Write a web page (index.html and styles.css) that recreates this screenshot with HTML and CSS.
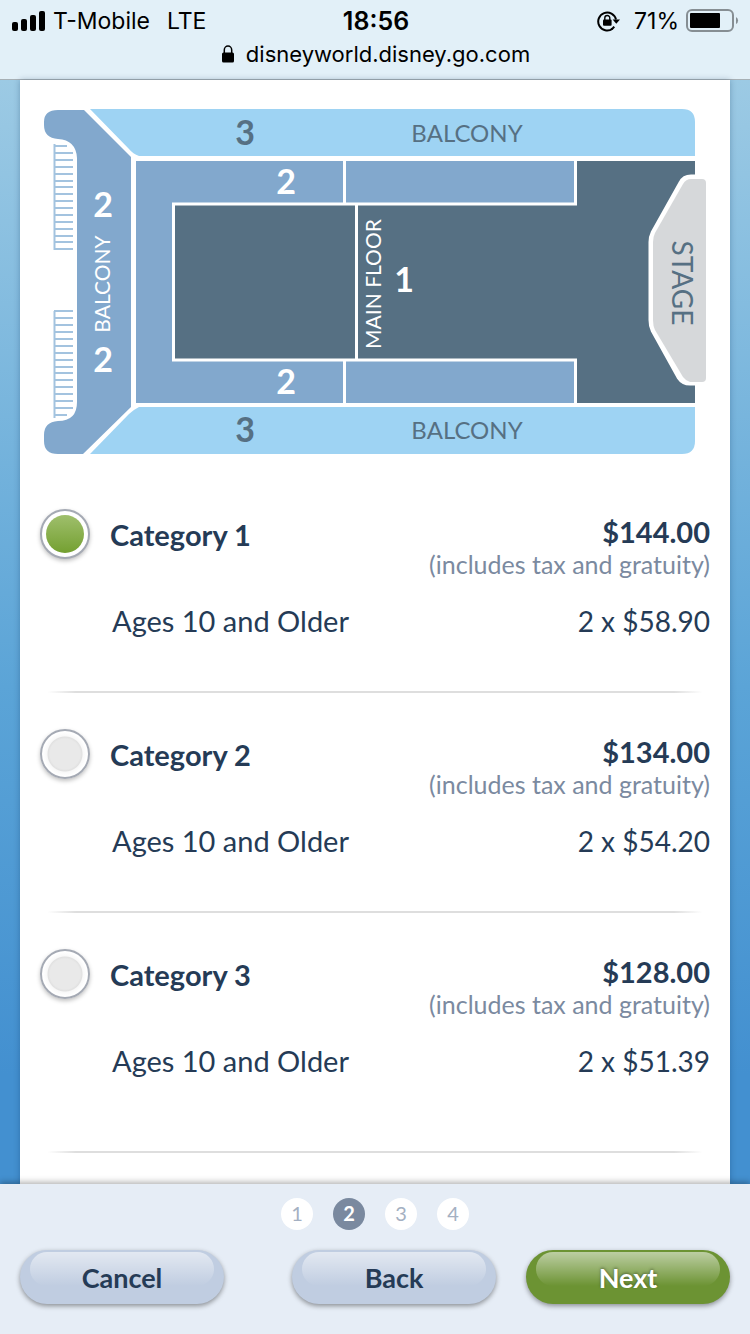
FILE: index.html
```html
<!DOCTYPE html>
<html lang="en">
<head>
    <meta charset="UTF-8">
    <meta name="viewport" content="width=device-width, initial-scale=1.0">
    <title>Select Category</title>
    <link rel="stylesheet" href="styles.css">
</head>
<body>
<header class="browser-bar">
    <div class="status">
        <div class="status-left">
            <svg width="34" height="20" viewBox="0 0 34 20">
                <rect x="0" y="11" width="6" height="9" rx="2"/>
                <rect x="9" y="8" width="6" height="12" rx="2"/>
                <rect x="18" y="4" width="6" height="16" rx="2"/>
                <rect x="27" y="0" width="6" height="20" rx="2"/>
            </svg>
            <span>T-Mobile</span>
            <span class="network">LTE</span>
        </div>
        <div class="clock">18:56</div>
        <div class="status-right">
            <svg width="24" height="22" viewBox="0 0 24 22">
                <path d="M15.5 18.8A9 9 0 1 1 19 9.5" fill="none" stroke="#000" stroke-width="2"/>
                <path d="M14.2 19.4A9 9 0 0 0 17.2 16.6" fill="none" stroke="#000" stroke-width="2"/>
                <path d="M15.6 9.4h7.4l-3.7 4.4z"/>
                <rect x="6" y="9.5" width="8.6" height="6.3" rx="1"/>
                <path d="M7.8 10V8a2.5 2.5 0 0 1 5 0v2" fill="none" stroke="#000" stroke-width="1.4"/>
            </svg>
            <span class="charge">71%</span>
            <svg width="54" height="24" viewBox="0 0 54 24">
                <rect x="1" y="1" width="46" height="21" rx="5" fill="none" stroke="#868e93" stroke-width="2"/>
                <rect x="4" y="4" width="30" height="15" rx="1"/>
                <path d="M50 8a4 4 0 0 1 0 7z" fill="#868e93"/>
            </svg>
        </div>
    </div>
    <div class="address">
        <svg width="12" height="18" viewBox="0 0 12 18">
            <rect x="0" y="7.5" width="12" height="10" rx="1.5"/>
            <path d="M2.3 8.500V5a3.700 4 0 0 1 7.400 0v3.500" fill="none" stroke="#000" stroke-width="1.500"/>
        </svg>
        <span>disneyworld.disney.go.com</span>
    </div>
</header>

<main class="page">
    <div class="panel">
        <svg class="seating" viewBox="20 80 710 393" role="img" aria-label="Seating chart">
            <!-- upper and lower balconies -->
            <path class="balcony" d="M90 109H682Q695 109 695 122V156H139Q133 154 129 149Z"/>
            <path class="balcony" d="M90 454H682Q695 454 695 441V407H139Q133 410 129 414Z"/>
            <!-- rear balcony -->
            <path class="mid" d="M58 110H84L131 157V407L83 454H58Q44 454 44 441V435Q44 422 58 421Q77 421 77 402V158Q76 140 58 139Q44 138 44 125V122Q44 110 58 110Z"/>
            <!-- floor -->
            <path class="mid" d="M136 161H576V403H136Z"/>
            <path class="floor" d="M174 204H576V161H695V403H576V360H174Z"/>
            <path class="line" d="M173.500 204V360M172 204H577M172 360H577M356.500 204V360M344.500 161V204M344.500 360V403M575.500 161V205M575.500 359V403"/>
            <!-- stage -->
            <path d="M710 177H691Q684 177 681 183L653 233Q651 237 651 242V320Q651 326 653 330L679 377Q683 383 690 383H710" fill="#fff" stroke="#fff" stroke-width="5"/>
            <path class="stage" d="M691 179H702Q706 179 706 183V378Q706 382 702 382H690Q686 381 683 377L655 330Q653 326 653 320V242Q653 237 655 233L683 184Q686 179 691 179Z"/>
            <!-- stairs -->
            <path class="stairs" d="M54.500 144V250M54 146H67M54 153H73M54 160H73M54 167H73M54 174H73M54 181H73M54 187H73M54 194H73M54 201H73M54 208H73M54 215H73M54 222H73M54 229H73M54 236H73M54 242H73M54 249H73"/>
            <path class="stairs" d="M54.500 311V418M54 311H73M54 318H73M54 325H73M54 332H73M54 339H73M54 346H73M54 353H73M54 360H73M54 367H73M54 373H73M54 380H73M54 387H73M54 394H73M54 401H73M54 408H73M54 415H67"/>
            <text class="num dark" x="245" y="145">3</text>
            <text class="num dark" x="245" y="442">3</text>
            <text class="num" x="286" y="194">2</text>
            <text class="num" x="286" y="394">2</text>
            <text class="num" x="103" y="217">2</text>
            <text class="num" x="103" y="372">2</text>
            <text class="num" x="404" y="292">1</text>
            <text class="name dark" x="467" y="142">BALCONY</text>
            <text class="name dark" x="467" y="439">BALCONY</text>
            <text class="name side" transform="translate(110 284) rotate(-90)">BALCONY</text>
            <text class="name side" transform="translate(381 284) rotate(-90)">MAIN FLOOR</text>
            <text class="name big dark" transform="translate(672 283) rotate(90)">STAGE</text>
        </svg>

        <section class="category">
            <div class="category-head">
                <label class="pick"><input type="radio" name="category" checked> Category 1</label>
                <div class="price">
                    <strong>$144.00</strong>
                    <span>(includes tax and gratuity)</span>
                </div>
            </div>
            <div class="guests"><span>Ages 10 and Older</span><span class="amount">2 x $58.90</span></div>
        </section>
        <section class="category">
            <div class="category-head">
                <label class="pick"><input type="radio" name="category"> Category 2</label>
                <div class="price">
                    <strong>$134.00</strong>
                    <span>(includes tax and gratuity)</span>
                </div>
            </div>
            <div class="guests"><span>Ages 10 and Older</span><span class="amount">2 x $54.20</span></div>
        </section>
        <section class="category last">
            <div class="category-head">
                <label class="pick"><input type="radio" name="category"> Category 3</label>
                <div class="price">
                    <strong>$128.00</strong>
                    <span>(includes tax and gratuity)</span>
                </div>
            </div>
            <div class="guests"><span>Ages 10 and Older</span><span class="amount">2 x $51.39</span></div>
        </section>
    </div>
</main>

<footer class="actions">
    <ol class="steps">
        <li>1</li>
        <li class="current">2</li>
        <li>3</li>
        <li>4</li>
    </ol>
    <div class="buttons">
        <button class="btn" type="button"><span>Cancel</span></button>
        <div class="btn-group">
            <button class="btn" type="button"><span>Back</span></button>
            <button class="btn btn-next" type="button"><span>Next</span></button>
        </div>
    </div>
</footer>
</body>
</html>
```
FILE: styles.css
```css
* {
    box-sizing: border-box;
}

body {
    margin: 0;
    min-height: 100vh;
    display: flex;
    flex-direction: column;
    font-family: Lato, "Liberation Sans", sans-serif;
    color: #253b56;
}

/* Status and address bar */
.browser-bar {
    height: 80px;
    padding: 4px 10px 0 12px;
    background: #e2f0f8;
    border-bottom: 1px solid #a7b0b5;
    font-family: Inter, "Liberation Sans", sans-serif;
    font-size: 23px;
    color: #000;
}

.status {
    display: grid;
    grid-template-columns: 1fr auto 1fr;
    align-items: center;
    height: 33px;
}

.status-left,
.status-right {
    display: flex;
    align-items: center;
    gap: 7px;
}

.status-right {
    justify-content: flex-end;
}

.network {
    margin-left: 10px;
}

.clock {
    font-size: 25px;
    font-weight: 600;
}

.charge {
    margin-left: 6px;
}

.address {
    display: flex;
    justify-content: center;
    align-items: center;
    gap: 12px;
    height: 34px;
    font-size: 22px;
}

/* Content */
.page {
    flex: 1;
    display: flex;
    padding: 0 20px;
    background: linear-gradient(#9ccae4, #5ba4d7 55%, #4390d0 90%);
}

.panel {
    flex: 1;
    background: #fff;
    box-shadow: 0 0 6px rgba(0, 40, 80, 0.3);
}

.seating {
    display: block;
    width: 100%;
}

.seating .balcony { fill: #9ed3f3; }
.seating .mid { fill: #82a8cd; }
.seating .floor { fill: #567083; }
.seating .stage { fill: #d6d8da; }

.seating .line {
    fill: none;
    stroke: #fff;
    stroke-width: 3;
}

.seating .stairs {
    fill: none;
    stroke: #a3c3df;
    stroke-width: 2;
}

.seating text {
    fill: #fff;
    text-anchor: middle;
}

.seating .num {
    font-size: 34px;
    font-weight: 700;
}

.seating .name {
    font-size: 24px;
}

.seating .side {
    font-size: 21px;
}

.seating .big {
    font-size: 28px;
}

.seating .dark {
    fill: #567083;
}

.category {
    padding: 36px 20px 50px;
    border-bottom: 2px solid;
    border-image: linear-gradient(to right, transparent 4%, #dedede 8%, #dedede 92%, transparent 96%) 1;
}

.category.last {
    padding-bottom: 70px;
}

.category-head {
    display: flex;
    justify-content: space-between;
    height: 72px;
}

.pick {
    display: flex;
    align-items: center;
    gap: 20px;
    height: 50px;
    font-size: 29px;
    font-weight: 700;
}

.pick input {
    appearance: none;
    width: 50px;
    height: 50px;
    margin: 0;
    border: 2px solid #a5aab4;
    border-radius: 50%;
    background: radial-gradient(circle, #e9e9e9 15px, #e1e1e1 17px, #f8f8f8 18px, #fff 22px);
    box-shadow: 0 2px 4px rgba(0, 0, 0, 0.25);
}

.pick input:checked {
    background: linear-gradient(#9fbf6c, #74a031) content-box, #fff;
    padding: 4px;
}

.price {
    display: flex;
    flex-direction: column;
    align-items: flex-end;
    padding-top: 6px;
}

.price strong {
    font-size: 29px;
    line-height: 34px;
}

.price span {
    font-size: 25px;
    line-height: 30px;
    color: #7b8aa0;
}

.guests {
    display: flex;
    justify-content: space-between;
    margin-top: 20px;
    padding-left: 72px;
    font-size: 29px;
    line-height: 40px;
}

.guests .amount {
    font-size: 28px;
}

/* Footer */
.actions {
    position: relative;
    padding: 14px 20px 30px;
    background: #e6edf6;
    box-shadow: 0 -2px 6px rgba(0, 0, 0, 0.3);
}

.steps {
    display: flex;
    justify-content: center;
    gap: 20px;
    margin: 0 0 20px;
    padding: 0;
    list-style: none;
}

.steps li {
    width: 32px;
    height: 32px;
    border-radius: 50%;
    background: #fff;
    color: #a4b0c2;
    font-size: 20px;
    line-height: 30px;
    text-align: center;
}

.steps .current {
    background: #7a899f;
    color: #fff;
    font-weight: 700;
}

.buttons {
    display: flex;
    justify-content: space-between;
}

.btn-group {
    display: flex;
    gap: 30px;
}

.btn {
    position: relative;
    width: 204px;
    height: 54px;
    border: none;
    border-radius: 27px;
    background: #c0cde1;
    box-shadow: 0 2px 5px rgba(0, 0, 0, 0.4);
    color: #253b56;
    font-family: inherit;
    font-size: 27px;
    font-weight: 700;
    cursor: pointer;
}

.btn::before {
    content: "";
    position: absolute;
    top: 2px;
    left: 10px;
    right: 10px;
    height: 34px;
    border-radius: 17px;
    background: linear-gradient(rgba(255, 255, 255, 0.55), rgba(255, 255, 255, 0));
}

.btn span {
    position: relative;
}

.btn-next {
    background: #6c9333;
    color: #fff;
    text-shadow: 0 -1px 3px rgba(0, 0, 0, 0.4);
}
```
